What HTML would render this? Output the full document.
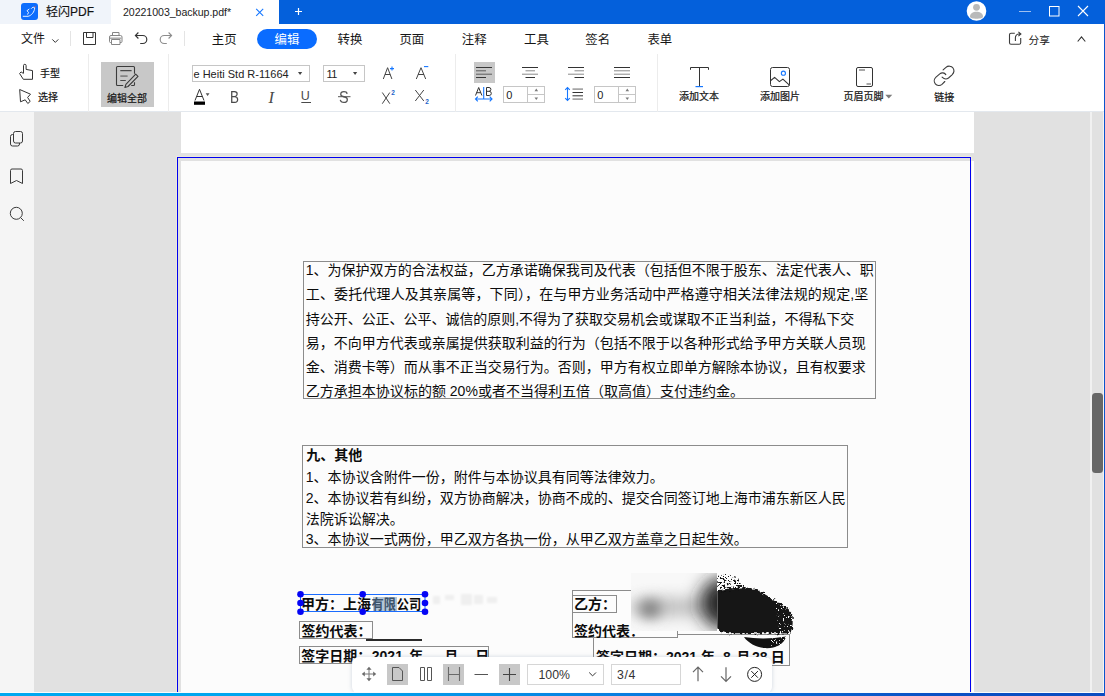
<!DOCTYPE html>
<html lang="zh-CN">
<head>
<meta charset="utf-8">
<title>轻闪PDF - 20221003_backup.pdf</title>
<style>
*{box-sizing:border-box;margin:0;padding:0}
html,body{width:1105px;height:696px;overflow:hidden}
body{position:relative;background:#e1e1e1;font-family:"Liberation Sans",sans-serif;color:#222;font-size:12px}
.a{position:absolute}
.ov{position:absolute;left:0;top:0;pointer-events:none;overflow:visible}
svg{display:block}
.ic{position:absolute;overflow:visible;fill:none;stroke:#333;stroke-width:1}
.lat{position:absolute;white-space:nowrap;line-height:1}
/* ---------- title bar ---------- */
#titlebar{left:0;top:0;width:1105px;height:24px;background:#0460db}
#tab1{left:0;top:0;width:111px;height:24px;background:#f0f4fa}
#tab2{left:111px;top:0;width:168px;height:24px;background:#fff}
#logo{left:21px;top:3px;width:17px;height:17px;border-radius:3px;background:#0d6efd}
/* ---------- menu + toolbar ---------- */
#menubar{left:0;top:24px;width:1104px;height:31px;background:#fff}
#toolbar{left:0;top:55px;width:1104px;height:57px;background:#fff;border-bottom:1px solid #e3e8ee}
#pill{left:257px;top:29px;width:60px;height:20px;border-radius:10px;background:#0a6cff}
.vsep{position:absolute;width:1px;background:#e4e4e4}
.selbg{position:absolute;background:#c8c8c8}
.box{position:absolute;border:1px solid #c6c6c6;background:#fff}
/* ---------- content ---------- */
#sidebar{left:0;top:112px;width:34px;height:581px;background:#f5f5f5}
#prevpage{left:181px;top:112px;width:793px;height:41px;background:#fff}
#page{left:181px;top:161px;width:793px;height:532px;background:#fff}
#pagein{left:181px;top:161px;width:789px;height:532px;background:#fcfcfc}
#bluerect{left:177px;top:157px;width:794px;height:540px;border:1px solid #0000f0;box-shadow:0 0 0 1px rgba(245,240,215,.55)}
.tb{position:absolute;border:1px solid #8c8c8c}
/* ---------- floating bar ---------- */
#float{left:352px;top:657px;width:420px;height:36px;background:#fff;border-radius:7px 7px 6px 6px;box-shadow:0 0 4px rgba(120,140,170,.35)}
.fbox{position:absolute;border:1px solid #d6d6d6;background:#fff}
/* ---------- frame ---------- */
#bottom{left:0;top:693px;width:1105px;height:3px;background:linear-gradient(90deg,#00a8f0 0,#00a4ee 30%,#0a78de 60%,#0b50c4 85%,#0b4cc0 100%)}
#bottomwhite{left:0;top:692px;width:1104px;height:1.4px;background:#fbfbfb}
#rightedge{left:1104px;top:24px;width:1px;height:672px;background:#0b54cc}
#rightwhite{left:1103.4px;top:112px;width:.6px;height:581px;background:#f4f4f4}
#sbline{left:1090px;top:112px;width:2px;height:580px;background:#f1f1f1}
#thumb{left:1092.3px;top:393px;width:11px;height:80px;border-radius:3.5px;background:#676767}
</style>
</head>
<body>

<!-- ================= content area ================= -->
<div class="a" id="prevpage"></div>
<div class="a" id="page"></div>
<div class="a" id="pagein"></div>
<div class="a" id="bluerect"></div>

<!-- paragraph frames -->
<div class="tb" style="left:303px;top:261px;width:573px;height:138px"></div>
<div class="tb" style="left:302px;top:445px;width:546px;height:103px"></div>

<!-- signature block frames -->
<div class="tb" style="left:299px;top:621px;width:74px;height:18px"></div>
<div class="a" style="left:366px;top:639px;width:56px;height:2px;background:#2a2a2a"></div>
<div class="tb" style="left:299px;top:646px;width:190px;height:18px"></div>
<div class="tb" style="left:572px;top:590px;width:106px;height:48px;border-right:none"></div>
<div class="a" style="left:677px;top:631px;width:1px;height:7px;background:#8c8c8c"></div>
<div class="tb" style="left:572px;top:595px;width:45px;height:18px"></div>
<div class="tb" style="left:593px;top:634px;width:197px;height:32px;border-top:none"></div>
<div class="a" style="left:677px;top:634px;width:113px;height:1px;background:#8c8c8c"></div>

<!-- selection highlight behind "有限" -->
<div class="a" style="left:373px;top:597px;width:24px;height:14px;background:#b4c6d8"></div>

<svg class="ov" width="1105" height="696" viewBox="0 0 1105 696" style="font-family:'Liberation Sans','Noto Sans CJK SC',sans-serif">
<g font-size="14" fill="#0c0c0c">
<text x="305.8" y="275" textLength="568" lengthAdjust="spacing">1、为保护双方的合法权益，乙方承诺确保我司及代表（包括但不限于股东、法定代表人、职</text>
<text x="305.8" y="299.27" textLength="562.5" lengthAdjust="spacing">工、委托代理人及其亲属等，下同），在与甲方业务活动中严格遵守相关法律法规的规定,坚</text>
<text x="305.8" y="323.54" textLength="548.5" lengthAdjust="spacing">持公开、公正、公平、诚信的原则,不得为了获取交易机会或谋取不正当利益，不得私下交</text>
<text x="305.8" y="347.81" textLength="560" lengthAdjust="spacing">易，不向甲方代表或亲属提供获取利益的行为（包括不限于以各种形式给予甲方关联人员现</text>
<text x="305.8" y="372.08" textLength="560" lengthAdjust="spacing">金、消费卡等）而从事不正当交易行为。否则，甲方有权立即单方解除本协议，且有权要求</text>
<text x="305.8" y="396.35" textLength="438.3" lengthAdjust="spacing">乙方承担本协议标的额 20%或者不当得利五倍（取高值）支付违约金。</text>
<text x="306.3" y="459.5" font-weight="bold">九、其他</text>
<text x="305.8" y="482.4" textLength="358" lengthAdjust="spacing">1、本协议含附件一份，附件与本协议具有同等法律效力。</text>
<text x="305.8" y="503.3" textLength="540" lengthAdjust="spacing">2、本协议若有纠纷，双方协商解决，协商不成的、提交合同签订地上海市浦东新区人民</text>
<text x="305.8" y="524.4">法院诉讼解决。</text>
<text x="305.8" y="543.6" textLength="442" lengthAdjust="spacing">3、本协议一式两份，甲乙双方各执一份，从甲乙双方盖章之日起生效。</text>
</g>
<g font-size="14" font-weight="bold" fill="#0c0c0c">
<text x="301" y="609.2">甲方：上海</text>
<text x="301.500" y="635.6">签约代表：</text>
<text x="301.300" y="661">签字日期：</text>
<text x="371.800" y="661">2021</text>
<text x="409.300" y="661">年</text>
<text x="444.300" y="661">月</text>
<text x="475.300" y="661">日</text>
<text x="574" y="608.8">乙方：</text>
<text x="574" y="636">签约代表：</text>
<text x="596" y="662">签字日期：2021 年</text>
<text x="723" y="662">8</text>
<text x="736.300" y="662">月</text>
<text x="752" y="662">28</text>
<text x="770.800" y="662">日</text>
<g transform="translate(371.5 609.2) scale(0.87 1)"><text x="0" y="0" fill="#3d536b">有限</text></g>
<g transform="translate(396.8 609.2) scale(0.87 1)"><text x="0" y="0">公司</text></g>
</g>
</svg>

<!-- blurred (redacted) region + ink stamp -->
<svg class="ov" width="1105" height="696" viewBox="0 0 1105 696">
  <defs>
    <filter id="bl" x="-80%" y="-80%" width="260%" height="260%"><feGaussianBlur stdDeviation="6.5"/></filter>
    <filter id="bl3" x="-80%" y="-80%" width="260%" height="260%"><feGaussianBlur stdDeviation="9"/></filter>
    <filter id="bl2" x="-80%" y="-80%" width="260%" height="260%"><feGaussianBlur stdDeviation="8"/></filter>
    <filter id="rag" x="-10%" y="-10%" width="120%" height="120%">
      <feTurbulence type="fractalNoise" baseFrequency="0.35" numOctaves="2" seed="7" result="n"/>
      <feDisplacementMap in="SourceGraphic" in2="n" scale="6" xChannelSelector="R" yChannelSelector="G"/>
    </filter>
    <filter id="spk" x="0" y="0" width="100%" height="100%">
      <feTurbulence type="fractalNoise" baseFrequency="0.55" numOctaves="2" seed="11" result="n"/>
      <feColorMatrix in="n" type="matrix" values="0 0 0 0 0  0 0 0 0 0  0 0 0 0 0  14 0 0 0 -7.7" result="a"/>
      <feComposite in="SourceGraphic" in2="a" operator="in"/>
    </filter>
    <filter id="spk2" x="0" y="0" width="100%" height="100%">
      <feTurbulence type="fractalNoise" baseFrequency="0.6" numOctaves="2" seed="23" result="n"/>
      <feColorMatrix in="n" type="matrix" values="0 0 0 0 0  0 0 0 0 0  0 0 0 0 0  0 14 0 0 -8.9" result="a"/>
      <feComposite in="SourceGraphic" in2="a" operator="in"/>
    </filter>
    <clipPath id="blc"><rect x="631" y="573" width="86" height="58"/></clipPath>
    <clipPath id="stc"><rect x="717.3" y="560" width="90" height="100"/></clipPath>
  </defs>
  <rect x="631" y="573" width="86" height="58" fill="#f8f8f8"/>
  <g clip-path="url(#blc)">
    <ellipse cx="668" cy="607" rx="42" ry="9" fill="#bcbcbc" filter="url(#bl2)"/>
    <ellipse cx="650" cy="609" rx="11" ry="9" fill="#7a7a7a" filter="url(#bl)"/>
    <ellipse cx="722" cy="603" rx="22" ry="25" fill="#222" filter="url(#bl3)"/>
  </g>
  <g fill="#121212" clip-path="url(#stc)">
    <path filter="url(#rag)" d="M712 591 C725 589.500 735 587.500 743.500 587.300 C752 587.500 758 590 764 593.800 C770 597.500 774 599.500 778.400 602.200 C783 605 787 607.500 790 610 C792.500 613 793 617 792.700 621.600 C792.500 627 792 631 791.400 633.500 L775 633.300 L728 633.300 C720 632.500 713 628 712 623 Z"/>
    <path filter="url(#spk)" d="M717 576 L726 574 L737 577 L747 589 L717 593 Z"/>
    <path d="M744 637 C756 639 772 639 786 636.500 C784 645 774 649 764 648 C756 647 748 643 744 637 Z"/>
  </g>
  <g fill="#fcfcfc" clip-path="url(#stc)">
    <path filter="url(#spk2)" d="M775 602 L794 611 L794 634 L778 634 Z"/>
    <path filter="url(#spk2)" d="M770 639 L788 636 L784 648 L772 649 Z"/>
  </g>
</svg>

<!-- faint ghosting right of the selected line -->
<svg class="ov" width="1105" height="696" viewBox="0 0 1105 696"><g fill="#efefef" filter="url(#gh)"><defs><filter id="gh"><feGaussianBlur stdDeviation="1.1"/></filter></defs>
<rect x="433" y="596" width="7" height="8"/><rect x="445" y="595" width="9" height="5"/><rect x="461" y="594" width="11" height="11"/><rect x="474" y="595" width="9" height="9"/><rect x="487" y="597" width="10" height="6"/></g></svg>

<!-- selection frame + handles -->
<svg class="ov" width="1105" height="696" viewBox="0 0 1105 696">
  <rect x="300.500" y="594.500" width="124.500" height="17" fill="none" stroke="#1a6cff" stroke-width="1"/>
  <g fill="#0505f5">
    <circle cx="300.500" cy="594.300" r="3.300"/><circle cx="362.700" cy="594.300" r="3.300"/><circle cx="425" cy="594.300" r="3.300"/>
    <circle cx="300.500" cy="603" r="3.300"/><circle cx="425" cy="603" r="3.300"/>
    <circle cx="300.500" cy="611.700" r="3.300"/><circle cx="362.700" cy="611.700" r="3.300"/><circle cx="425" cy="611.700" r="3.300"/>
  </g>
</svg>

<!-- ================= floating page bar ================= -->
<div class="a" id="float">
  <div class="selbg" style="left:35px;top:7px;width:21px;height:21px"></div>
  <div class="selbg" style="left:91px;top:7px;width:21px;height:21px"></div>
  <div class="selbg" style="left:147px;top:7px;width:21px;height:21px"></div>
  <div class="fbox" style="left:175px;top:7px;width:77px;height:21px"></div>
  <div class="fbox" style="left:259px;top:7px;width:70px;height:21px"></div>
  <span class="lat" style="left:186.500px;top:11.500px;font-size:12.300px;color:#333">100%</span>
  <span class="lat" style="left:265px;top:11.500px;font-size:12.300px;color:#333;letter-spacing:.6px">3/4</span>
  <svg class="ic" style="left:0;top:0;stroke:#6a6a6a" width="420" height="36" viewBox="0 0 420 36">
    <!-- move -->
    <path d="M17 12v10M12 17h10" stroke="#777"/><path d="M17 9.800l2.600 3h-5.200zM17 24.200l2.600-3h-5.200zM9.800 17l3-2.600v5.200zM24.200 17l-3-2.600v5.200z" fill="#6a6a6a" stroke="none"/>
    <!-- single page -->
    <path d="M40.500 10.500h6.500l3.500 3.500v9.500h-10z" stroke="#555"/>
    <!-- two pages -->
    <path d="M68.500 10.500h4v13h-4zM75.500 10.500h4v13h-4z" stroke="#555"/>
    <!-- fit width -->
    <path d="M96.500 10v14M107.500 10v14M96.500 17.500h11" stroke="#6a6a6a" stroke-width="1.1"/>
    <!-- minus / plus -->
    <path d="M122.500 17.500h13.500" stroke="#555"/>
    <path d="M151 17.500h13M157.500 11v13" stroke="#444" stroke-width="1.1"/>
    <!-- chevron -->
    <path d="M237.200 15.500l3.400 3.400 3.400-3.400" stroke="#333"/>
    <!-- up / down -->
    <path d="M346 24.300v-14M341 15.200l5-5 5 5" stroke="#666" stroke-width="1.2"/>
    <path d="M374 10.300v14M369 19.400l5 5 5-5" stroke="#666" stroke-width="1.2"/>
    <!-- close -->
    <circle cx="402.600" cy="17.400" r="7" stroke="#222"/>
    <path d="M399.300 14.100l6.600 6.600M405.900 14.100l-6.600 6.600" stroke="#222"/>
  </svg>
</div>

<!-- ================= window chrome ================= -->
<div class="a" id="sidebar"></div>
<svg class="ic" style="left:0;top:112px;stroke:#3a3a3a" width="34" height="120" viewBox="0 112 34 120">
  <rect x="13.500" y="131.500" width="9" height="11.500" rx="2"/>
  <path d="M13.500 134.500h-1a2 2 0 0 0-2 2v7.500a2 2 0 0 0 2 2h5a2 2 0 0 0 2-2v-1"/>
  <path d="M10.500 183.500v-13a1.500 1.500 0 0 1 1.500-1.500h9a1.500 1.500 0 0 1 1.500 1.500v13l-6-3z"/>
  <circle cx="16.300" cy="213.300" r="6"/><path d="M20.600 217.600l3.200 3.200"/>
</svg>

<div class="a" id="titlebar"></div>
<div class="a" id="tab1"></div>
<div class="a" id="tab2"></div>
<div class="a" id="logo"></div>
<svg class="ic" style="left:21px;top:3px;stroke:#fff;stroke-width:1" width="17" height="17" viewBox="0 0 17 17">
  <path d="M2.200 13.300H7C10.500 12.600 13.500 9 13.700 4.700C12.800 4 11.400 4 10.400 5.400M8 6.200L6 7.700L7.500 9.500L6.700 11.200" stroke-linecap="round" stroke-linejoin="round" stroke-width=".9"/>
  <circle cx="14" cy="3.700" r=".7" fill="#d8565a" stroke="none"/>
</svg>
<span class="lat" style="left:123px;top:6.900px;font-size:10.600px;color:#1c1c1c;letter-spacing:-.05px">20221003_backup.pdf*</span>
<svg class="ic" style="left:0;top:0" width="1105" height="24" viewBox="0 0 1105 24">
  <path d="M256.200 8.800l7 7M263.200 8.800l-7 7" stroke="#1677ff" stroke-width="1.1"/>
  <path d="M295 11.500h7M298.500 8v7" stroke="#fff" stroke-width="1.200"/>
  <circle cx="976.500" cy="11" r="9.800" fill="#fff" stroke="none"/>
  <circle cx="976.500" cy="7.300" r="3.400" fill="#b9b9b9" stroke="none"/>
  <path d="M970 16.800c0-3.400 2.900-5 6.500-5s6.500 1.600 6.500 5c0 1.200-2.900 2-6.500 2s-6.500-.8-6.500-2z" fill="#b9b9b9" stroke="none"/>
  <path d="M1019 11.500h12" stroke="#9fc0f0"/>
  <rect x="1049.500" y="6.500" width="9.500" height="9.500" stroke="#fff"/>
  <path d="M1078 6l10 10M1088 6l-10 10" stroke="#fff" stroke-width="1.100"/>
</svg>

<div class="a" id="menubar"></div>
<div class="a" id="toolbar"></div>
<div class="a" id="pill"></div>
<div class="vsep" style="left:70px;top:31px;height:15px"></div>
<div class="vsep" style="left:184px;top:31px;height:15px"></div>
<div class="vsep" style="left:88px;top:54px;height:58px;background:#ececec"></div>
<div class="vsep" style="left:168px;top:54px;height:58px;background:#ececec"></div>
<div class="vsep" style="left:455px;top:54px;height:58px;background:#ececec"></div>
<div class="vsep" style="left:657px;top:54px;height:58px;background:#ececec"></div>

<!-- menu row icons -->
<svg class="ic" style="left:0;top:24px" width="1105" height="31" viewBox="0 24 1105 31">
  <path d="M52.300 39.400l3 3 3-3" stroke="#333"/>
  <!-- save -->
  <path d="M83.500 32.500h12v12h-12zM86.500 32.500v5h6.500v-5" stroke="#333"/>
  <!-- print -->
  <g stroke="#868686"><path d="M112.500 35.500v-3h6.500v3M111.500 42.500h-1a1 1 0 0 1-1-1v-4.500a1.500 1.500 0 0 1 1.500-1.500h9.500a1.500 1.500 0 0 1 1.500 1.500v4.500a1 1 0 0 1-1 1h-1M111.500 39.500h8.500v5h-8.500z"/><path d="M110 38.200h11.500" stroke="#a5a5a5" stroke-width="1.400"/></g>
  <!-- undo -->
  <path d="M135.400 35.500h7.400a4 4 0 0 1 0 8h-2.600M138.400 32.500l-3 3 3 3" stroke="#333" stroke-width="1.150"/>
  <!-- redo -->
  <path d="M171.600 35.500h-7.400a4 4 0 0 0 0 8h2.600M168.600 32.500l3 3-3 3" stroke="#8c8c8c" stroke-width="1.100"/>
  <!-- share -->
  <path d="M1014.800 33.300h-3.800a1.500 1.500 0 0 0-1.500 1.500v7.900a1.500 1.500 0 0 0 1.500 1.500h8.200a1.500 1.500 0 0 0 1.500-1.500v-4.600M1015.400 41v-3.400a3.600 3.600 0 0 1 3.600-3.600h1.600M1018.400 31.900l2.500 2.100-2.500 2.200" stroke="#3c3c3c" stroke-width="1.100"/>
  <path d="M1077.700 41.500L1081.500 36.900L1085.300 41.500" stroke="#333" stroke-width="1.100"/>
</svg>

<!-- toolbar: selected backgrounds / boxes -->
<div class="selbg" style="left:101px;top:62px;width:53px;height:45px"></div>
<div class="selbg" style="left:474px;top:62px;width:21px;height:21px"></div>
<div class="box" style="left:192px;top:65px;width:118px;height:17px"></div>
<div class="box" style="left:323px;top:65px;width:42px;height:17px"></div>
<div class="box" style="left:503px;top:86px;width:42px;height:17px"></div>
<div class="box" style="left:594px;top:86px;width:42px;height:17px"></div>
<div class="a" style="left:527px;top:86px;width:1px;height:17px;background:#c6c6c6"></div>
<div class="a" style="left:527px;top:94px;width:17px;height:1px;background:#c6c6c6"></div>
<div class="a" style="left:618px;top:86px;width:1px;height:17px;background:#c6c6c6"></div>
<div class="a" style="left:618px;top:94px;width:17px;height:1px;background:#c6c6c6"></div>

<span class="lat" style="left:193.500px;top:69.400px;font-size:11px;color:#222">e Heiti Std R-11664</span>
<span class="lat" style="left:326.600px;top:69.400px;font-size:11px;color:#222;letter-spacing:-.7px">11</span>
<span class="lat" style="left:506.300px;top:90.100px;font-size:11px;color:#222">0</span>
<span class="lat" style="left:597.200px;top:90.100px;font-size:11px;color:#222">0</span>
<span class="lat" style="left:230.200px;top:90px;font-size:16px;color:#4a4a4a;transform:scaleX(.84);transform-origin:0 0">B</span>
<span class="lat" style="left:268.600px;top:89.500px;font-size:16.500px;color:#4a4a4a;font-family:'Liberation Serif',serif;font-style:italic">I</span>
<span class="lat" style="left:300.800px;top:90px;font-size:12.500px;color:#4a4a4a">U</span>
<span class="lat" style="left:339.300px;top:90.300px;font-size:16px;color:#555;transform:scaleX(.9);transform-origin:0 0">S</span>

<!-- toolbar icons -->
<svg class="ic" style="left:0;top:55px" width="1105" height="57" viewBox="0 55 1105 57">
  <!-- hand -->
  <path d="M23.500 73.200V65.600a1.300 1.300 0 0 1 2.600 0V69.400L32.500 70.600V79.300H23.300L19.600 73.500L21.100 71.900L23.500 73.600" stroke="#333" stroke-linejoin="round"/>
  <!-- arrow cursor -->
  <path d="M19.700 89.500L30.500 94.200L27.600 97.400L30.200 101.400L27.800 103.500L25.200 99.800L20.500 101.800Z" stroke="#333" stroke-linejoin="round"/>
  <!-- edit all -->
  <g stroke="#3c3c3c" stroke-width="1.100"><path d="M134.500 73.800V67.500a1 1 0 0 0-1-1H117.500a1 1 0 0 0-1 1V84.500a1 1 0 0 0 1 1H123.200M134.500 82.300V84.500a1 1 0 0 1-1 1H131.200"/><path d="M120.300 70.600H131.600M120.300 80.500H125.800" stroke="#4a4a4a"/><path d="M120.300 76.100H127.600" stroke="#7c7c7c" stroke-width="1.600"/><path d="M135.700 74.200L138 76.400L128 86.500L124.900 87.500L125.900 84.400Z" stroke-linejoin="round"/></g>
  <!-- font colour -->
  <path d="M195 100.500l4.500-11.200 4.500 11.200M196.800 96.500h5.400" stroke="#333"/>
  <rect x="194" y="101.500" width="11" height="3.300" fill="#000" stroke="none"/>
  <path d="M205.700 93.300h3.800l-1.900 2.800z" fill="#555" stroke="none"/>
  <path d="M298 72h4.200l-2.100 3z" fill="#444" stroke="none"/>
  <path d="M353 72h4.200l-2.100 3z" fill="#444" stroke="none"/>
  <path d="M301.300 102.500h9.700" stroke="#4a4a4a"/>
  <path d="M338 96.700h12.500" stroke="#555"/>
  <!-- A+ A- -->
  <path d="M383.300 79l4.300-11.300 4.300 11.300M385 74.500h5.200" stroke="#444"/>
  <path d="M390 68.600h4M392 66.600v4" stroke="#1677ff" stroke-width="1.100"/>
  <path d="M416.300 79l4.700-11.300 4.700 11.300M418 74.500h6" stroke="#444"/>
  <path d="M424 66.600h4.300" stroke="#1677ff" stroke-width="1.100"/>
  <!-- X2 x2 -->
  <path d="M382.300 92.500l7.500 11.200M389.800 92.500l-7.500 11.200" stroke="#444"/>
  <path d="M415.300 90l8.500 11M423.800 90l-8.500 11" stroke="#444"/>
  <!-- align -->
  <path d="M476 67.500h16M476 77.500h10" stroke="#383838"/><path d="M476 70.800h10M476 74.200h16" stroke="#5c5c5c"/>
  <path d="M522 67.500h16M525.500 77.500h9.500" stroke="#333"/><path d="M525.500 70.800h9.500M522 74.200h16" stroke="#8a8a8a"/>
  <path d="M568 67.500h16M574.500 77.500h9.500" stroke="#333"/><path d="M574.500 70.800h9.500M568 74.200h16" stroke="#8a8a8a"/>
  <path d="M614 67.500h16M614 77.500h16" stroke="#333"/><path d="M614 70.800h16M614 74.200h16" stroke="#8a8a8a"/>
  <!-- A|B spacing -->
  <path d="M475.500 95.500l3.200-8 3.200 8M476.700 92.700h4" stroke="#333"/>
  <path d="M486.500 87.500v8h2.700a2 2 0 0 0 0-4.200h-2.700M489 91.300a1.900 1.900 0 0 0 0-3.800h-2.500" stroke="#333"/>
  <path d="M483.700 87v12M475.500 99h16.500M477.800 96.700l-2.300 2.300 2.300 2.300M489.700 96.700l2.300 2.300-2.300 2.300" stroke="#1677ff" stroke-width="1.100"/>
  <!-- spin arrows -->
  <g fill="#7a7a7a" stroke="none"><path d="M534.500 91.200h3.600l-1.800-2.800zM534.500 97.400h3.600l-1.800 2.600z"/><path d="M625.500 91.200h3.600l-1.800-2.800zM625.500 97.400h3.600l-1.800 2.600z"/></g>
  <!-- line spacing -->
  <path d="M567.500 87.500v13M565.200 89.800l2.300-2.300 2.300 2.300M565.200 98.200l2.300 2.300 2.300-2.300" stroke="#1677ff" stroke-width="1.100"/>
  <path d="M572.500 92.500h10.500M572.500 95.800h10.500" stroke="#333" stroke-width="1"/><path d="M572.500 89.100h10.500M572.500 99.100h10.500" stroke="#a6a6a6" stroke-width="1.600"/>
  <!-- add text -->
  <path d="M690.500 69.800v-2.300h18v2.300M699.500 67.500v19" stroke="#333" stroke-linejoin="miter"/><path d="M695.500 86.600h7.500" stroke="#1677ff" stroke-width="1.200"/>
  <!-- add image -->
  <rect x="770.500" y="67.500" width="19" height="19" rx="2" stroke="#333"/>
  <path d="M770.500 80.700L774.600 77.400L779.400 81.600L782.900 79.100L789.400 85.200" stroke="#333" stroke-width="1.100" stroke-linejoin="round"/>
  <circle cx="783.400" cy="73.200" r="2.050" stroke="#1677ff" stroke-width="1.100"/>
  <!-- header/footer -->
  <rect x="856.500" y="67.500" width="16" height="19" rx="1.500" stroke="#333"/>
  <path d="M859 70h6M866.500 84h4.500" stroke="#8c8c8c" stroke-width="1.500"/>
  <path d="M885.300 94.800h7l-3.500 3.600z" fill="#7d7d7d" stroke="none"/>
  <!-- link -->
  <path d="M943.100 69.900l2.900-2.600c2-1.700 5.500-1.500 7 .700 1.700 2.500.800 5-1 6.800l-3.500 3.200c-2 1.500-4.500 1-6.400-.800M945.800 74.600c-1.300-2-4.200-2.300-6-.800l-3.800 3.400c-2 1.800-2.400 4.600-.700 6.600 1.700 2.100 4.700 2.200 6.700.500l2.800-2.800" stroke="#3a3a3a" stroke-width="1.100" stroke-linecap="round"/>
</svg>
<span class="lat" style="left:391.200px;top:90.300px;font-size:6.500px;font-weight:bold;color:#2463c9">2</span>
<span class="lat" style="left:425.300px;top:98.900px;font-size:6.500px;font-weight:bold;color:#2463c9">2</span>

<svg class="ov" width="1105" height="696" viewBox="0 0 1105 696" style="font-family:'Liberation Sans','Noto Sans CJK SC',sans-serif">
<text x="46" y="16.3" font-size="12" fill="#111" stroke="#111" stroke-width="0.15">轻闪PDF</text>
<text x="21" y="42.6" font-size="12" fill="#161616">文件</text>
<g font-size="12.4" fill="#161616">
<text x="211.800" y="43.8">主页</text>
<text x="274.600" y="43.8" fill="#fff">编辑</text>
<text x="337.600" y="43.8">转换</text>
<text x="399.400" y="43.8">页面</text>
<text x="461.800" y="43.8">注释</text>
<text x="524" y="43.8">工具</text>
<text x="585.300" y="43.8">签名</text>
<text x="647.400" y="43.8">表单</text>
</g>
<text x="1028.500" y="43.5" font-size="10.7" fill="#161616">分享</text>
<g font-size="10" fill="#161616" stroke="#161616" stroke-width="0.22">
<text x="40" y="77.3">手型</text>
<text x="38" y="100.9">选择</text>
<text x="107" y="102.400">编辑全部</text>
<text x="679" y="100.400">添加文本</text>
<text x="760" y="100.400">添加图片</text>
<text x="843.400" y="100.400">页眉页脚</text>
<text x="934.300" y="100.9">链接</text>
</g>
</svg>

<!-- frame -->
<div class="a" id="sbline"></div>
<div class="a" id="thumb"></div>
<div class="a" id="rightwhite"></div>
<div class="a" id="bottomwhite"></div>
<div class="a" id="bottom"></div>
<div class="a" id="rightedge"></div>
</body>
</html>
